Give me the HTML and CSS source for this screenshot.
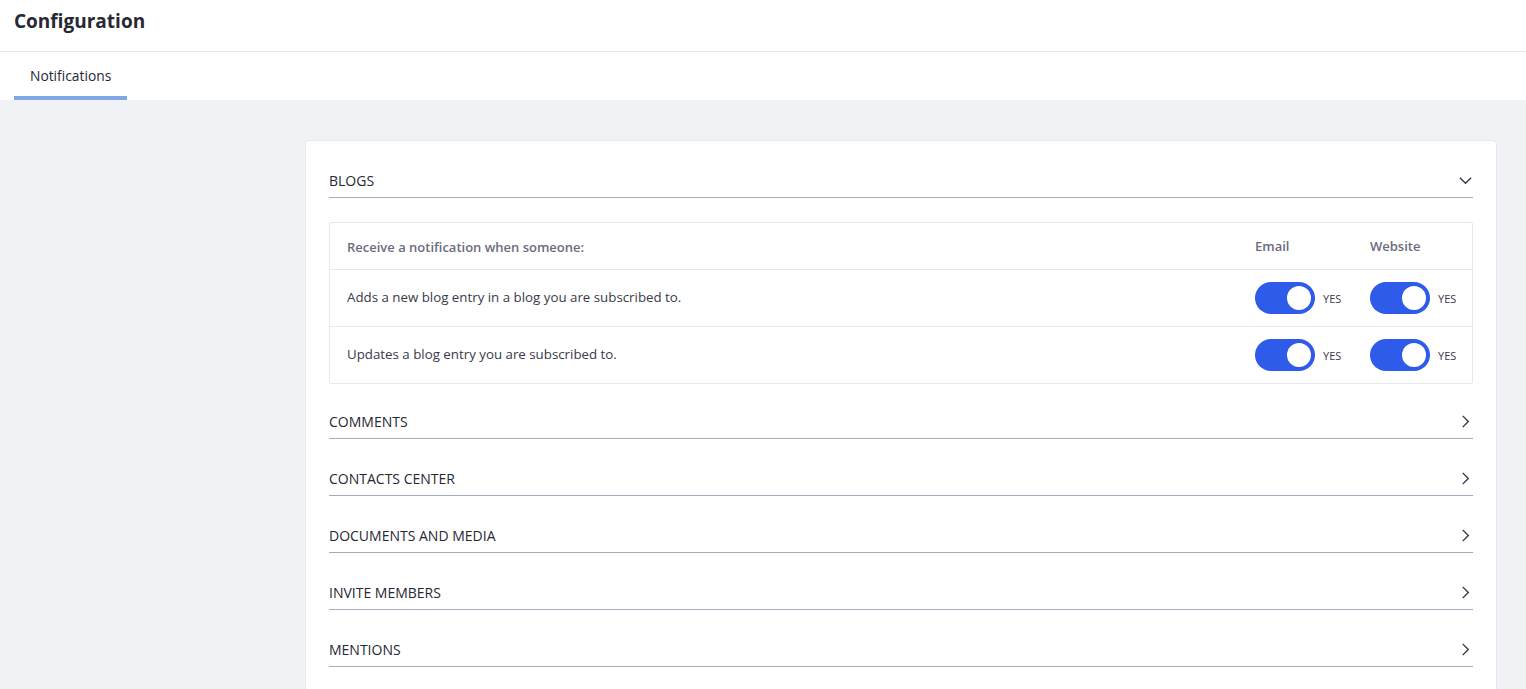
FILE: index.html
```html
<!DOCTYPE html>
<html lang="en">
<head>
    <meta charset="UTF-8">
    <title>Configuration</title>
    <link rel="stylesheet" href="styles.css">
</head>
<body>
    <div class="top">
        <div class="title">Configuration</div>
        <div class="tabs">
            <div class="tab active">Notifications</div>
        </div>
    </div>

    <div class="main">
        <div class="card">
            <div class="section">
                <div class="section-header">
                    <span>BLOGS</span>
                    <svg class="chev" viewBox="0 0 16 16"><path d="M2 5l6 6 6-6"/></svg>
                </div>
                <div class="section-body">
                    <div class="table">
                        <div class="row head">
                            <div class="cell-text">Receive a notification when someone:</div>
                            <div class="col">Email</div>
                            <div class="col">Website</div>
                        </div>
                        <div class="row">
                            <div class="cell-text">Adds a new blog entry in a blog you are subscribed to.</div>
                            <div class="col"><span class="toggle"><span class="knob"></span></span><span class="yes">YES</span></div>
                            <div class="col"><span class="toggle"><span class="knob"></span></span><span class="yes">YES</span></div>
                        </div>
                        <div class="row">
                            <div class="cell-text">Updates a blog entry you are subscribed to.</div>
                            <div class="col"><span class="toggle"><span class="knob"></span></span><span class="yes">YES</span></div>
                            <div class="col"><span class="toggle"><span class="knob"></span></span><span class="yes">YES</span></div>
                        </div>
                    </div>
                </div>
            </div>

            <div class="section">
                <div class="section-header">
                    <span>COMMENTS</span>
                    <svg class="chev" viewBox="0 0 16 16"><path d="M5 2l6 6-6 6"/></svg>
                </div>
            </div>
            <div class="section">
                <div class="section-header">
                    <span>CONTACTS CENTER</span>
                    <svg class="chev" viewBox="0 0 16 16"><path d="M5 2l6 6-6 6"/></svg>
                </div>
            </div>
            <div class="section">
                <div class="section-header">
                    <span>DOCUMENTS AND MEDIA</span>
                    <svg class="chev" viewBox="0 0 16 16"><path d="M5 2l6 6-6 6"/></svg>
                </div>
            </div>
            <div class="section">
                <div class="section-header">
                    <span>INVITE MEMBERS</span>
                    <svg class="chev" viewBox="0 0 16 16"><path d="M5 2l6 6-6 6"/></svg>
                </div>
            </div>
            <div class="section">
                <div class="section-header">
                    <span>MENTIONS</span>
                    <svg class="chev" viewBox="0 0 16 16"><path d="M5 2l6 6-6 6"/></svg>
                </div>
            </div>
        </div>
    </div>
</body>
</html>
```

FILE: styles.css
```css
* {
    margin: 0;
    padding: 0;
    box-sizing: border-box;
}

body {
    font-family: 'Open Sans', 'Noto Sans', sans-serif;
    color: #272833;
    background-color: #f1f2f5;
    height: 689px;
    overflow: hidden;
}

.top {
    background: #fff;
}

.title {
    height: 52px;
    padding: 8px 14px 0;
    font-size: 19px;
    font-weight: bold;
    color: #272833;
    border-bottom: 1px solid #e7e7ed;
}

.tabs {
    display: flex;
    padding-left: 14px;
}

.tab {
    height: 48px;
    padding: 14px 16px 0;
    font-size: 13.8px;
    color: #272833;
}

.tab.active {
    border-bottom: 4px solid #80a6e8;
}

.main {
    padding: 40px 29px 0 305px;
}

.card {
    background: #fff;
    border: 1px solid #e7e7ed;
    border-radius: 4px;
    padding: 24px 23px 40px;
}

.section + .section {
    margin-top: 24px;
}

.section-header {
    display: flex;
    align-items: center;
    justify-content: space-between;
    height: 33px;
    padding-bottom: 1px;
    border-bottom: 1px solid #a7a9bc;
    font-size: 14px;
    color: #272833;
}

.chev {
    width: 15px;
    height: 15px;
    fill: none;
    stroke: #393a4a;
    stroke-width: 1.5;
}

.section-body {
    margin-top: 24px;
    margin-bottom: -2px;
}

.table {
    border: 1px solid #e7e7ed;
    border-radius: 2px;
}

.row {
    display: flex;
    align-items: center;
    height: 57px;
    padding: 0 14px 0 17px;
    border-top: 1px solid #e7e7ed;
    font-size: 13.3px;
}

.row.head {
    height: 46px;
    border-top: none;
    color: #6b6c7e;
    font-size: 13px;
    font-weight: 600;
}

.row.head .cell-text {
    padding-top: 1px;
}

.cell-text {
    flex: 1;
}

.row:not(.head) .cell-text {
    color: #393a4a;
    padding-bottom: 2px;
}

.col {
    width: 115px;
    display: flex;
    align-items: center;
}

.col:last-child {
    width: 88px;
}

.toggle {
    position: relative;
    width: 60px;
    height: 32px;
    border-radius: 16px;
    background: #2e5bea;
}

.knob {
    position: absolute;
    right: 4px;
    top: 4px;
    width: 24px;
    height: 24px;
    border-radius: 50%;
    background: #fff;
}

.yes {
    margin-left: 8px;
    font-size: 11px;
    color: #393a4a;
}
```
